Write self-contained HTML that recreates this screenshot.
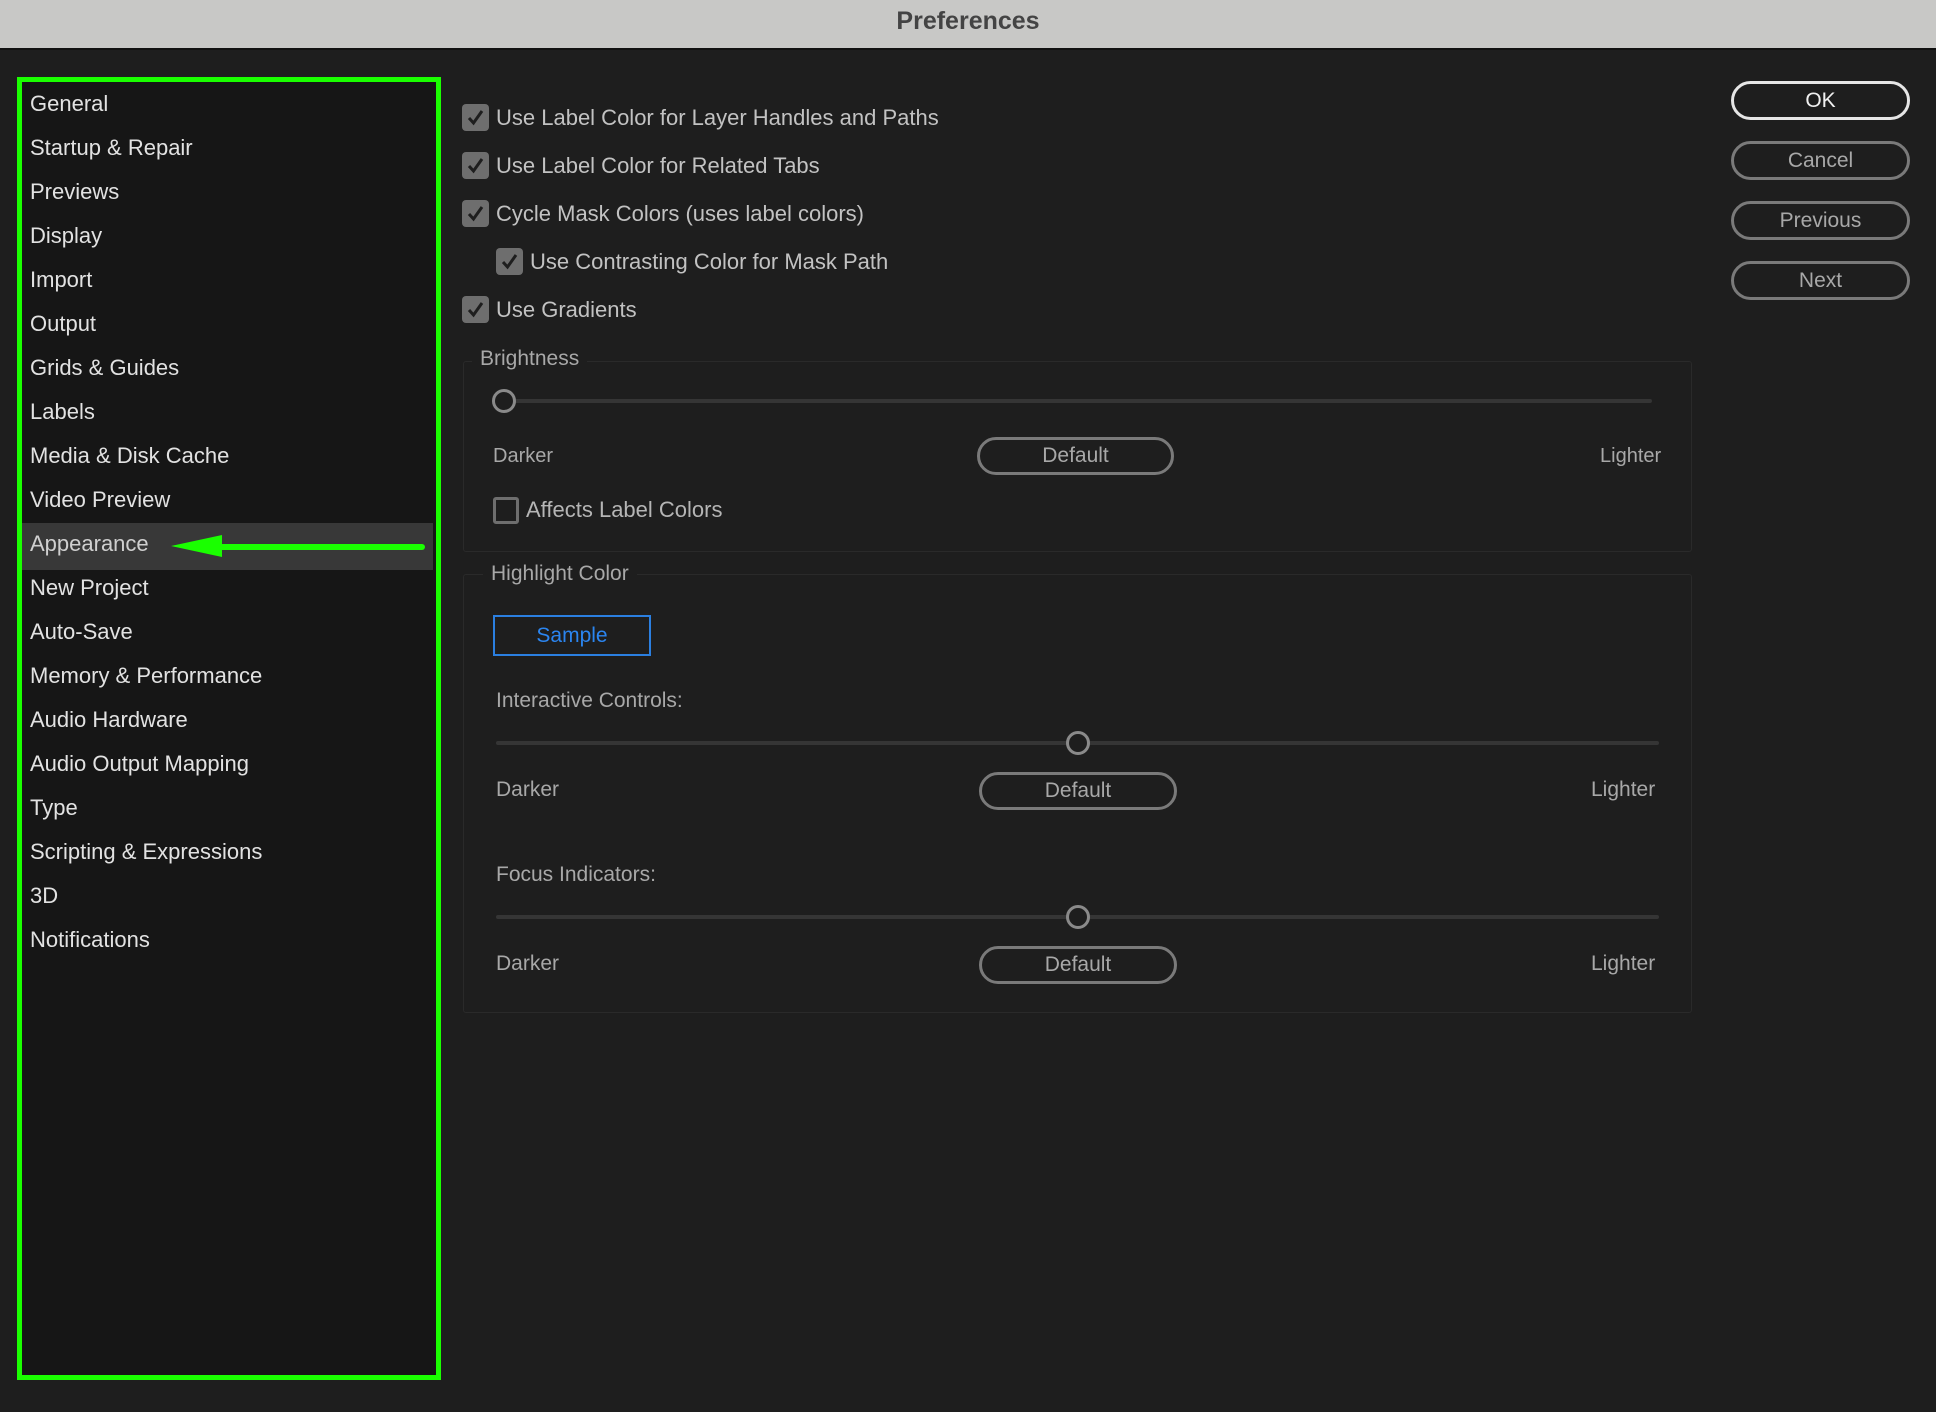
<!DOCTYPE html>
<html><head><meta charset="utf-8"><style>
*{margin:0;padding:0;box-sizing:border-box}
body{width:1936px;height:1412px;background:#1e1e1e;font-family:"Liberation Sans",sans-serif;position:relative;overflow:hidden}
.a{position:absolute;white-space:nowrap}
.title{left:0;top:0;width:1936px;height:50px;background:#c8c8c6;border-bottom:2px solid #111;text-align:center;font-weight:bold;font-size:25px;color:#444;line-height:42px}
.side{left:17px;top:77px;width:424px;height:1303px;background:#161616;border:5px solid #1aff00}
.si{left:30px;font-size:22px;color:#e2e2e2;line-height:26px}
.sel{left:22px;top:523px;width:411px;height:47px;background:#383838}
.cb{width:27px;height:27px;background:#6e6e6e;border-radius:4px}
.cb svg{position:absolute;left:4px;top:4px}
.cl{font-size:22px;color:#c2c2c2;line-height:26px}
.grp{border:1px solid #2a2a2a;border-radius:3px}
.leg{font-size:21px;color:#a8a8a8;background:#1e1e1e;padding:0 8px;line-height:24px}
.lab{font-size:21px;color:#a8a8a8;line-height:24px}
.trk{height:4px;background:#353535;border-radius:2px}
.knob{width:24px;height:24px;border:3px solid #8a8a8a;border-radius:50%;background:#1e1e1e}
.btn{border:3px solid #7a7a7a;border-radius:20px;color:#a8a8a8;font-size:21px;text-align:center}
</style></head><body>
<div class="a title">Preferences</div>
<div class="a side"></div>
<div class="a sel"></div>
<div class="a si" style="top:91px">General</div>
<div class="a si" style="top:135px">Startup &amp; Repair</div>
<div class="a si" style="top:179px">Previews</div>
<div class="a si" style="top:223px">Display</div>
<div class="a si" style="top:267px">Import</div>
<div class="a si" style="top:311px">Output</div>
<div class="a si" style="top:355px">Grids &amp; Guides</div>
<div class="a si" style="top:399px">Labels</div>
<div class="a si" style="top:443px">Media &amp; Disk Cache</div>
<div class="a si" style="top:487px">Video Preview</div>
<div class="a si" style="top:531px;color:#cfcfcf">Appearance</div>
<div class="a si" style="top:575px">New Project</div>
<div class="a si" style="top:619px">Auto-Save</div>
<div class="a si" style="top:663px">Memory &amp; Performance</div>
<div class="a si" style="top:707px">Audio Hardware</div>
<div class="a si" style="top:751px">Audio Output Mapping</div>
<div class="a si" style="top:795px">Type</div>
<div class="a si" style="top:839px">Scripting &amp; Expressions</div>
<div class="a si" style="top:883px">3D</div>
<div class="a si" style="top:927px">Notifications</div>
<svg class="a" style="left:165px;top:530px" width="265" height="32"><line x1="50" y1="17" x2="257" y2="17" stroke="#1aff00" stroke-width="6" stroke-linecap="round"/><polygon points="6,16 57,5 57,27" fill="#1aff00"/></svg>

<div class="a cb" style="left:462px;top:104px"><svg width="19" height="19" viewBox="0 0 19 19"><path d="M3 10 L7.5 15 L16 3" stroke="#1e1e1e" stroke-width="3" fill="none"/></svg></div>
<div class="a cl" style="left:496px;top:105px">Use Label Color for Layer Handles and Paths</div>
<div class="a cb" style="left:462px;top:152px"><svg width="19" height="19" viewBox="0 0 19 19"><path d="M3 10 L7.5 15 L16 3" stroke="#1e1e1e" stroke-width="3" fill="none"/></svg></div>
<div class="a cl" style="left:496px;top:153px">Use Label Color for Related Tabs</div>
<div class="a cb" style="left:462px;top:200px"><svg width="19" height="19" viewBox="0 0 19 19"><path d="M3 10 L7.5 15 L16 3" stroke="#1e1e1e" stroke-width="3" fill="none"/></svg></div>
<div class="a cl" style="left:496px;top:201px">Cycle Mask Colors (uses label colors)</div>
<div class="a cb" style="left:496px;top:248px"><svg width="19" height="19" viewBox="0 0 19 19"><path d="M3 10 L7.5 15 L16 3" stroke="#1e1e1e" stroke-width="3" fill="none"/></svg></div>
<div class="a cl" style="left:530px;top:249px">Use Contrasting Color for Mask Path</div>
<div class="a cb" style="left:462px;top:296px"><svg width="19" height="19" viewBox="0 0 19 19"><path d="M3 10 L7.5 15 L16 3" stroke="#1e1e1e" stroke-width="3" fill="none"/></svg></div>
<div class="a cl" style="left:496px;top:297px">Use Gradients</div>

<div class="a grp" style="left:463px;top:361px;width:1229px;height:191px"></div>
<div class="a leg" style="left:472px;top:347px">Brightness</div>
<div class="a trk" style="left:504px;top:399px;width:1148px"></div>
<div class="a knob" style="left:492px;top:389px"></div>
<div class="a lab" style="left:493px;top:444px;font-size:20px">Darker</div>
<div class="a btn" style="left:977px;top:437px;width:197px;height:38px;line-height:32px">Default</div>
<div class="a lab" style="left:1600px;top:444px;font-size:20px">Lighter</div>
<div class="a" style="left:493px;top:497px;width:26px;height:27px;border:3px solid #6e6e6e;border-radius:3px"></div>
<div class="a cl" style="left:526px;top:497px;color:#b5b5b5">Affects Label Colors</div>

<div class="a grp" style="left:463px;top:574px;width:1229px;height:439px"></div>
<div class="a leg" style="left:483px;top:562px">Highlight Color</div>
<div class="a" style="left:493px;top:615px;width:158px;height:41px;border:2px solid #2b7fe0;color:#2b85f0;font-size:21px;text-align:center;line-height:37px">Sample</div>
<div class="a lab" style="left:496px;top:689px">Interactive Controls:</div>
<div class="a trk" style="left:496px;top:741px;width:1163px"></div>
<div class="a knob" style="left:1066px;top:731px"></div>
<div class="a lab" style="left:496px;top:778px">Darker</div>
<div class="a btn" style="left:979px;top:772px;width:198px;height:38px;line-height:32px">Default</div>
<div class="a lab" style="left:1591px;top:778px">Lighter</div>
<div class="a lab" style="left:496px;top:863px">Focus Indicators:</div>
<div class="a trk" style="left:496px;top:915px;width:1163px"></div>
<div class="a knob" style="left:1066px;top:905px"></div>
<div class="a lab" style="left:496px;top:952px">Darker</div>
<div class="a btn" style="left:979px;top:946px;width:198px;height:38px;line-height:32px">Default</div>
<div class="a lab" style="left:1591px;top:952px">Lighter</div>

<div class="a btn" style="left:1731px;top:81px;width:179px;height:39px;line-height:33px;border-color:#e6e6e6;color:#f0f0f0">OK</div>
<div class="a btn" style="left:1731px;top:141px;width:179px;height:39px;line-height:33px">Cancel</div>
<div class="a btn" style="left:1731px;top:201px;width:179px;height:39px;line-height:33px">Previous</div>
<div class="a btn" style="left:1731px;top:261px;width:179px;height:39px;line-height:33px">Next</div>
</body></html>
